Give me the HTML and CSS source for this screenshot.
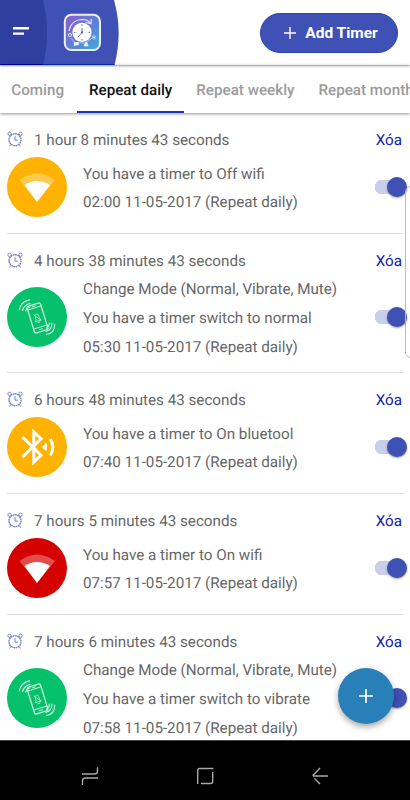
FILE: index.html
```
<!DOCTYPE html>
<html lang="en">
<head>
<meta charset="utf-8">
<title>Timers</title>
<link rel="stylesheet" href="styles.css">
</head>
<body>
<svg class="defs" width="0" height="0">
  <defs>
    <linearGradient id="logo-fill" x1="0" y1="0" x2="1" y2="1">
      <stop offset="0" stop-color="#8e5ccb"/><stop offset=".55" stop-color="#5c80d8"/><stop offset="1" stop-color="#3fb0dc"/>
    </linearGradient>
    <symbol id="alarm" viewBox="0 0 16 16">
      <g fill="none" stroke="#7480cb" stroke-width="1">
        <circle cx="8" cy="8.7" r="6" stroke-width="1.4" stroke-dasharray="1.8 .5"/>
        <circle cx="2.5" cy="2.8" r="1.7" stroke-width=".9"/><circle cx="13.5" cy="2.8" r="1.7" stroke-width=".9"/>
        <path d="M8 5.2v4h3M3.8 13.5l-1.3 2M12.2 13.5l1.3 2"/>
      </g>
    </symbol>
    <symbol id="wifi" viewBox="0 0 60 60">
      <path d="M12.5 23Q30 10 48 23L30 45Z" fill="#fff" fill-opacity=".3"/>
      <path d="M17.5 28Q30 20 43 28L30 45Z" fill="#fff"/>
    </symbol>
    <symbol id="vibrate" viewBox="0 0 60 60">
      <g fill="none" stroke="#c4f1db" stroke-width=".9" stroke-linecap="round">
        <g transform="rotate(-17 30.5 31)">
          <rect x="23.5" y="17" width="14" height="28" rx="2" stroke-width="1.3"/>
          <path d="M23.5 20.5h14M23.5 40.5h14M29 42.7h3M29 18.8h3"/>
          <path d="M27.5 34h6l-1.2-2v-3q0-2-1.8-2t-1.8 2v3zM29.5 35.5h2M28 27l5 7" stroke-width=".7"/>
        </g>
        <path d="M12.3 23Q14 14.5 22.5 12.8M15.5 23.5Q17 18 23 16.3M18.5 24Q19.5 21 23 19.7M47.7 37Q48 46 39.5 47.5M45 36Q45 42.5 39 44.5M42.5 36Q42.5 39.5 39.5 41" stroke-width="1.2"/>
      </g>
    </symbol>
    <symbol id="bluetooth" viewBox="0 0 60 60">
      <g fill="none" stroke="#fff" stroke-width="3">
        <path d="M15.5 20l18.5 18.3-7.2 6.7V15l7.2 6.7L15.5 40"/>
        <path d="M43.2 22Q48.5 30 43.2 38.5"/>
      </g>
      <path d="M35 30l4.2-4.2q2 4.2 0 8.4z" fill="#fff"/>
    </symbol>
  </defs>
</svg>
<main class="app">
  <header class="topbar">
    <svg class="brand" viewBox="0 0 120 65">
      <path d="M0 0H114Q123 32 114.5 65H0Z" fill="#3f51b5"/>
      <path d="M0 0H43Q51 32 43 65H0Z" fill="#303f9f"/>
      <path d="M0 64.5H43" stroke="#0000a8"/><path d="M43 64.5H114.5" stroke="#0030bc"/>
      <path d="M13 28.2h16M13 33.6h11" stroke="#fff" stroke-width="2.4"/>
      <rect x="64.8" y="14.8" width="35.2" height="35.2" rx="6.5" fill="url(#logo-fill)" stroke="#f0eefc" stroke-width="2"/>
      <circle cx="82" cy="32.4" r="9.6" fill="#fff"/>
      <path d="M69 31Q71 20 82 19.5q6 0 8 3.2M85.5 22.5l5.5 1.2.3-4.7" fill="none" stroke="#eae4ff" stroke-width="1.2"/>
      <path d="M71 38l4 5h11l7-6" fill="none" stroke="#d3e4ff" stroke-width=".6"/>
      <circle cx="70" cy="35" r="1.6" fill="none" stroke="#e6e8ff"/>
      <path d="M74 42.5h4.5v2.5h-2.5l-1.5 1zM84.2 46l1-3.2q1-1.6 2 0l1 3.2zM94 34.5v5.5M91.8 36l4.4 2.5M91.8 38.5l4.4-2.5" fill="#fff" stroke="#eef4ff" stroke-width=".6"/>
      <path d="M82 28v4.5L78.2 37M82 24.2v1.6M82 39v1.6M73.8 32.4h1.6M88.6 32.4h1.6" fill="none" stroke="#505fc0" stroke-width=".9"/>
      <circle cx="82" cy="32.3" r="1.1" fill="#505fc0"/>
    </svg>
    <button class="add"><svg viewBox="0 0 14 14"><path d="M7 1v12M1 7h12"/></svg>Add Timer</button>
  </header>
  <nav class="tabs"><span class="tab">Coming</span><span class="tab active">Repeat daily</span><span class="tab">Repeat weekly</span><span class="tab">Repeat monthly</span></nav>
  <section class="list">
    <article class="row">
      <div class="head"><svg class="clock"><use href="#alarm"/></svg><span>1 hour 8 minutes 43 seconds</span><a>Xóa</a></div>
      <div class="body"><svg class="disc amber"><use href="#wifi"/></svg><div class="info"><p>You have a timer to Off wifi</p><p>02:00 11-05-2017 (Repeat daily)</p></div><i class="switch"></i></div>
    </article>
    <article class="row tall">
      <div class="head"><svg class="clock"><use href="#alarm"/></svg><span>4 hours 38 minutes 43 seconds</span><a>Xóa</a></div>
      <div class="body"><svg class="disc green"><use href="#vibrate"/></svg><div class="info"><p>Change Mode (Normal, Vibrate, Mute)</p><p>You have a timer switch to normal</p><p>05:30 11-05-2017 (Repeat daily)</p></div><i class="switch"></i></div>
    </article>
    <article class="row">
      <div class="head"><svg class="clock"><use href="#alarm"/></svg><span>6 hours 48 minutes 43 seconds</span><a>Xóa</a></div>
      <div class="body"><svg class="disc amber"><use href="#bluetooth"/></svg><div class="info"><p>You have a timer to On bluetool</p><p>07:40 11-05-2017 (Repeat daily)</p></div><i class="switch"></i></div>
    </article>
    <article class="row">
      <div class="head"><svg class="clock"><use href="#alarm"/></svg><span>7 hours 5 minutes 43 seconds</span><a>Xóa</a></div>
      <div class="body"><svg class="disc red"><use href="#wifi"/></svg><div class="info"><p>You have a timer to On wifi</p><p>07:57 11-05-2017 (Repeat daily)</p></div><i class="switch"></i></div>
    </article>
    <article class="row tall">
      <div class="head"><svg class="clock"><use href="#alarm"/></svg><span>7 hours 6 minutes 43 seconds</span><a>Xóa</a></div>
      <div class="body"><svg class="disc green"><use href="#vibrate"/></svg><div class="info"><p>Change Mode (Normal, Vibrate, Mute)</p><p>You have a timer switch to vibrate</p><p>07:58 11-05-2017 (Repeat daily)</p></div><i class="switch"></i></div>
    </article>
  </section>
  <i class="edge"></i>
  <button class="fab"><svg viewBox="0 0 14 14"><path d="M7 0v14M0 7h14"/></svg></button>
  <footer class="nav">
    <svg viewBox="0 0 20 20"><path d="M2 8h12.5q3 0 3-3V1.2M18 12H5.500q-3 0-3 3v4"/></svg>
    <svg viewBox="0 0 20 20"><path d="M2.700 18V4.500q0-2 2-2H18.500M17.700 6v9.500q0 2-2 2H6"/></svg>
    <svg viewBox="0 0 20 20"><path d="M18 10H3M10 2L2.600 9.800M4.500 12.500L10 18"/></svg>
  </footer>
</main>
</body>
</html>
```
FILE: styles.css
```
* { box-sizing: border-box; }
body { margin: 0; background: #fff; color: #666; font-family: Roboto, "Liberation Sans", sans-serif; font-size: 15.2px; text-rendering: geometricPrecision; }
p { margin: 0; }
button { border: 0; padding: 0; font: inherit; }
.defs { position: absolute; }
.app { position: relative; width: 410px; height: 800px; overflow: hidden; display: flex; flex-direction: column; }
.topbar { flex: none; height: 65px; display: flex; align-items: center; justify-content: space-between; padding-right: 12px; box-shadow: 0 1px 2px rgba(0,0,0,.42); }
.brand { width: 120px; height: 65px; display: block; }
.add { width: 138px; height: 40px; border-radius: 20px; background: #3f51b5; border: 1px solid #2d42b0; color: #fff; font-weight: 700; font-size: 15.5px; display: flex; align-items: center; justify-content: center; gap: 8px; padding-left: 3px; }
.add svg { width: 14px; height: 14px; fill: none; stroke: #fff; stroke-width: 1.4; }
.tabs { flex: none; height: 48px; display: flex; padding-top: 1px; white-space: nowrap; box-shadow: 0 1px 3px rgba(0,0,0,.42); font-weight: 500; font-size: 15.2px; color: #9b9b9b; }
.tab { flex: none; padding: 0 12px; line-height: 48px; }
.tab:first-child { padding: 0 13px 0 11.3px; }
.tab.active { color: #111; box-shadow: inset 0 -2px #1a36b0; }
.list { flex: 1; min-height: 0; overflow: hidden; }
.row { height: 121px; padding: 12px 0 0 7px; }
.row.tall { height: 139px; }
.row::after { content: ""; display: block; width: 396px; height: 1px; background: #dedede; }
.head { height: 30px; display: flex; align-items: center; padding-right: 8px; }
.clock { width: 16px; height: 16px; margin: -2px 11px 0 0; }
.head a { margin-left: auto; color: #0f22ae; }
.body { height: 78px; padding-bottom: 13px; display: flex; align-items: center; }
.tall .body { height: 96px; padding-bottom: 13px; }
.disc { width: 60px; height: 60px; flex: none; border-radius: 50%; margin: -1px 16px 0 0; }
.amber { background: #ffb300; }
.green { background: #05c16b; }
.red { background: #d50000; }
.info { line-height: 28.6px; white-space: nowrap; padding-top: 1.5px; }
.switch { margin: -1px 3px 0 auto; width: 32px; height: 20px; background: radial-gradient(circle at 7px 7px, #c9ceeb 7px, transparent 7.5px) 0 3px no-repeat, linear-gradient(#c9ceeb, #c9ceeb) 7px 3px / 14px 14px no-repeat; display: flex; justify-content: flex-end; }
.switch::after { content: ""; width: 20px; height: 20px; border-radius: 50%; background: #3f51b5; box-shadow: 0 1px 2px rgba(0,0,0,.4); }
.edge { position: absolute; left: 405px; top: 186px; width: 12px; height: 172px; border: 1px solid #b8b8b8; border-radius: 7px; clip-path: inset(0); }
.fab { position: absolute; left: 338px; top: 668px; width: 56px; height: 56px; border-radius: 50%; background: #2980b9; box-shadow: 0 3px 6px rgba(0,0,0,.35); display: flex; align-items: center; justify-content: center; }
.fab svg { width: 14px; height: 14px; stroke: #fff; stroke-width: 1.7; }
.nav { flex: none; height: 60px; background: #000; border-top: 1px solid #444; display: flex; justify-content: space-between; align-items: center; padding: 11px 80px 0; position: relative; }
.nav svg { width: 20px; height: 20px; fill: none; stroke: #a8a8a8; stroke-width: 1.4; }
```
